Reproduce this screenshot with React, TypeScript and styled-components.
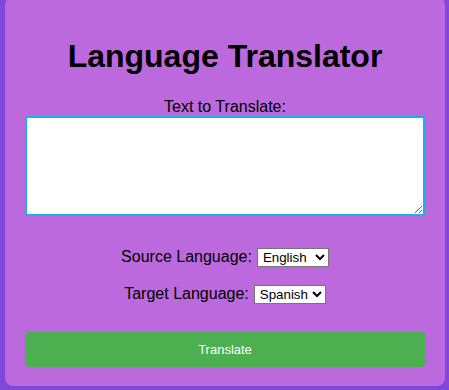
import styled, { createGlobalStyle } from "styled-components";

const GlobalStyle = createGlobalStyle`
  body {
    margin: 0;
    background: #7f47db;
    font-family: "Liberation Sans", Arial, sans-serif;
    color: #000;
  }
`;

const Card = styled.div`
  box-sizing: border-box;
  width: 440px;
  margin: -3px 5px 0;
  padding: 20px 20px 19px;
  background: #bc69dd;
  border-radius: 8px;
  text-align: center;
`;

const Title = styled.h1`
  font-size: 32px;
  font-weight: bold;
  margin: 21px 0 23px;
`;

const FieldLabel = styled.label`
  display: block;
  font-size: 16px;
`;

const TextBox = styled.textarea`
  display: block;
  box-sizing: border-box;
  width: 400px;
  height: 100px;
  margin: 0;
  border: 2px solid #19b1ea;
  border-radius: 3px;
  background: #fff;
  outline: none;
`;

const SelectRow = styled.div<{ $top: number }>`
  display: flex;
  justify-content: center;
  align-items: center;
  gap: 5px;
  margin-top: ${(p) => p.$top}px;
  font-size: 16px;
  height: 20px;
`;

const LangSelect = styled.select`
  font-family: "Liberation Sans", Arial, sans-serif;
  font-size: 13.33px;
  background: #fff;
  border: 1px solid #767676;
  border-radius: 0;
  height: 19px;
  padding: 0 0 0 1px;
`;

const TranslateButton = styled.button`
  display: block;
  width: 100%;
  margin-top: 28px;
  padding: 10px;
  border: none;
  border-radius: 4px;
  background: #4caf50;
  color: #fff;
  font-family: "Liberation Sans", Arial, sans-serif;
  font-size: 13px;
  line-height: 15px;
`;

export default function App() {
  return (
    <>
      <GlobalStyle />
      <Card>
        <Title>Language Translator</Title>
        <FieldLabel htmlFor="src-text">Text to Translate:</FieldLabel>
        <TextBox id="src-text" />
        <SelectRow $top={31}>
          <span>Source Language:</span>
          <LangSelect defaultValue="en">
            <option value="en">English</option>
            <option value="es">Spanish</option>
            <option value="fr">French</option>
          </LangSelect>
        </SelectRow>
        <SelectRow $top={17}>
          <span>Target Language:</span>
          <LangSelect defaultValue="es">
            <option value="en">English</option>
            <option value="es">Spanish</option>
            <option value="fr">French</option>
          </LangSelect>
        </SelectRow>
        <TranslateButton>Translate</TranslateButton>
      </Card>
    </>
  );
}
